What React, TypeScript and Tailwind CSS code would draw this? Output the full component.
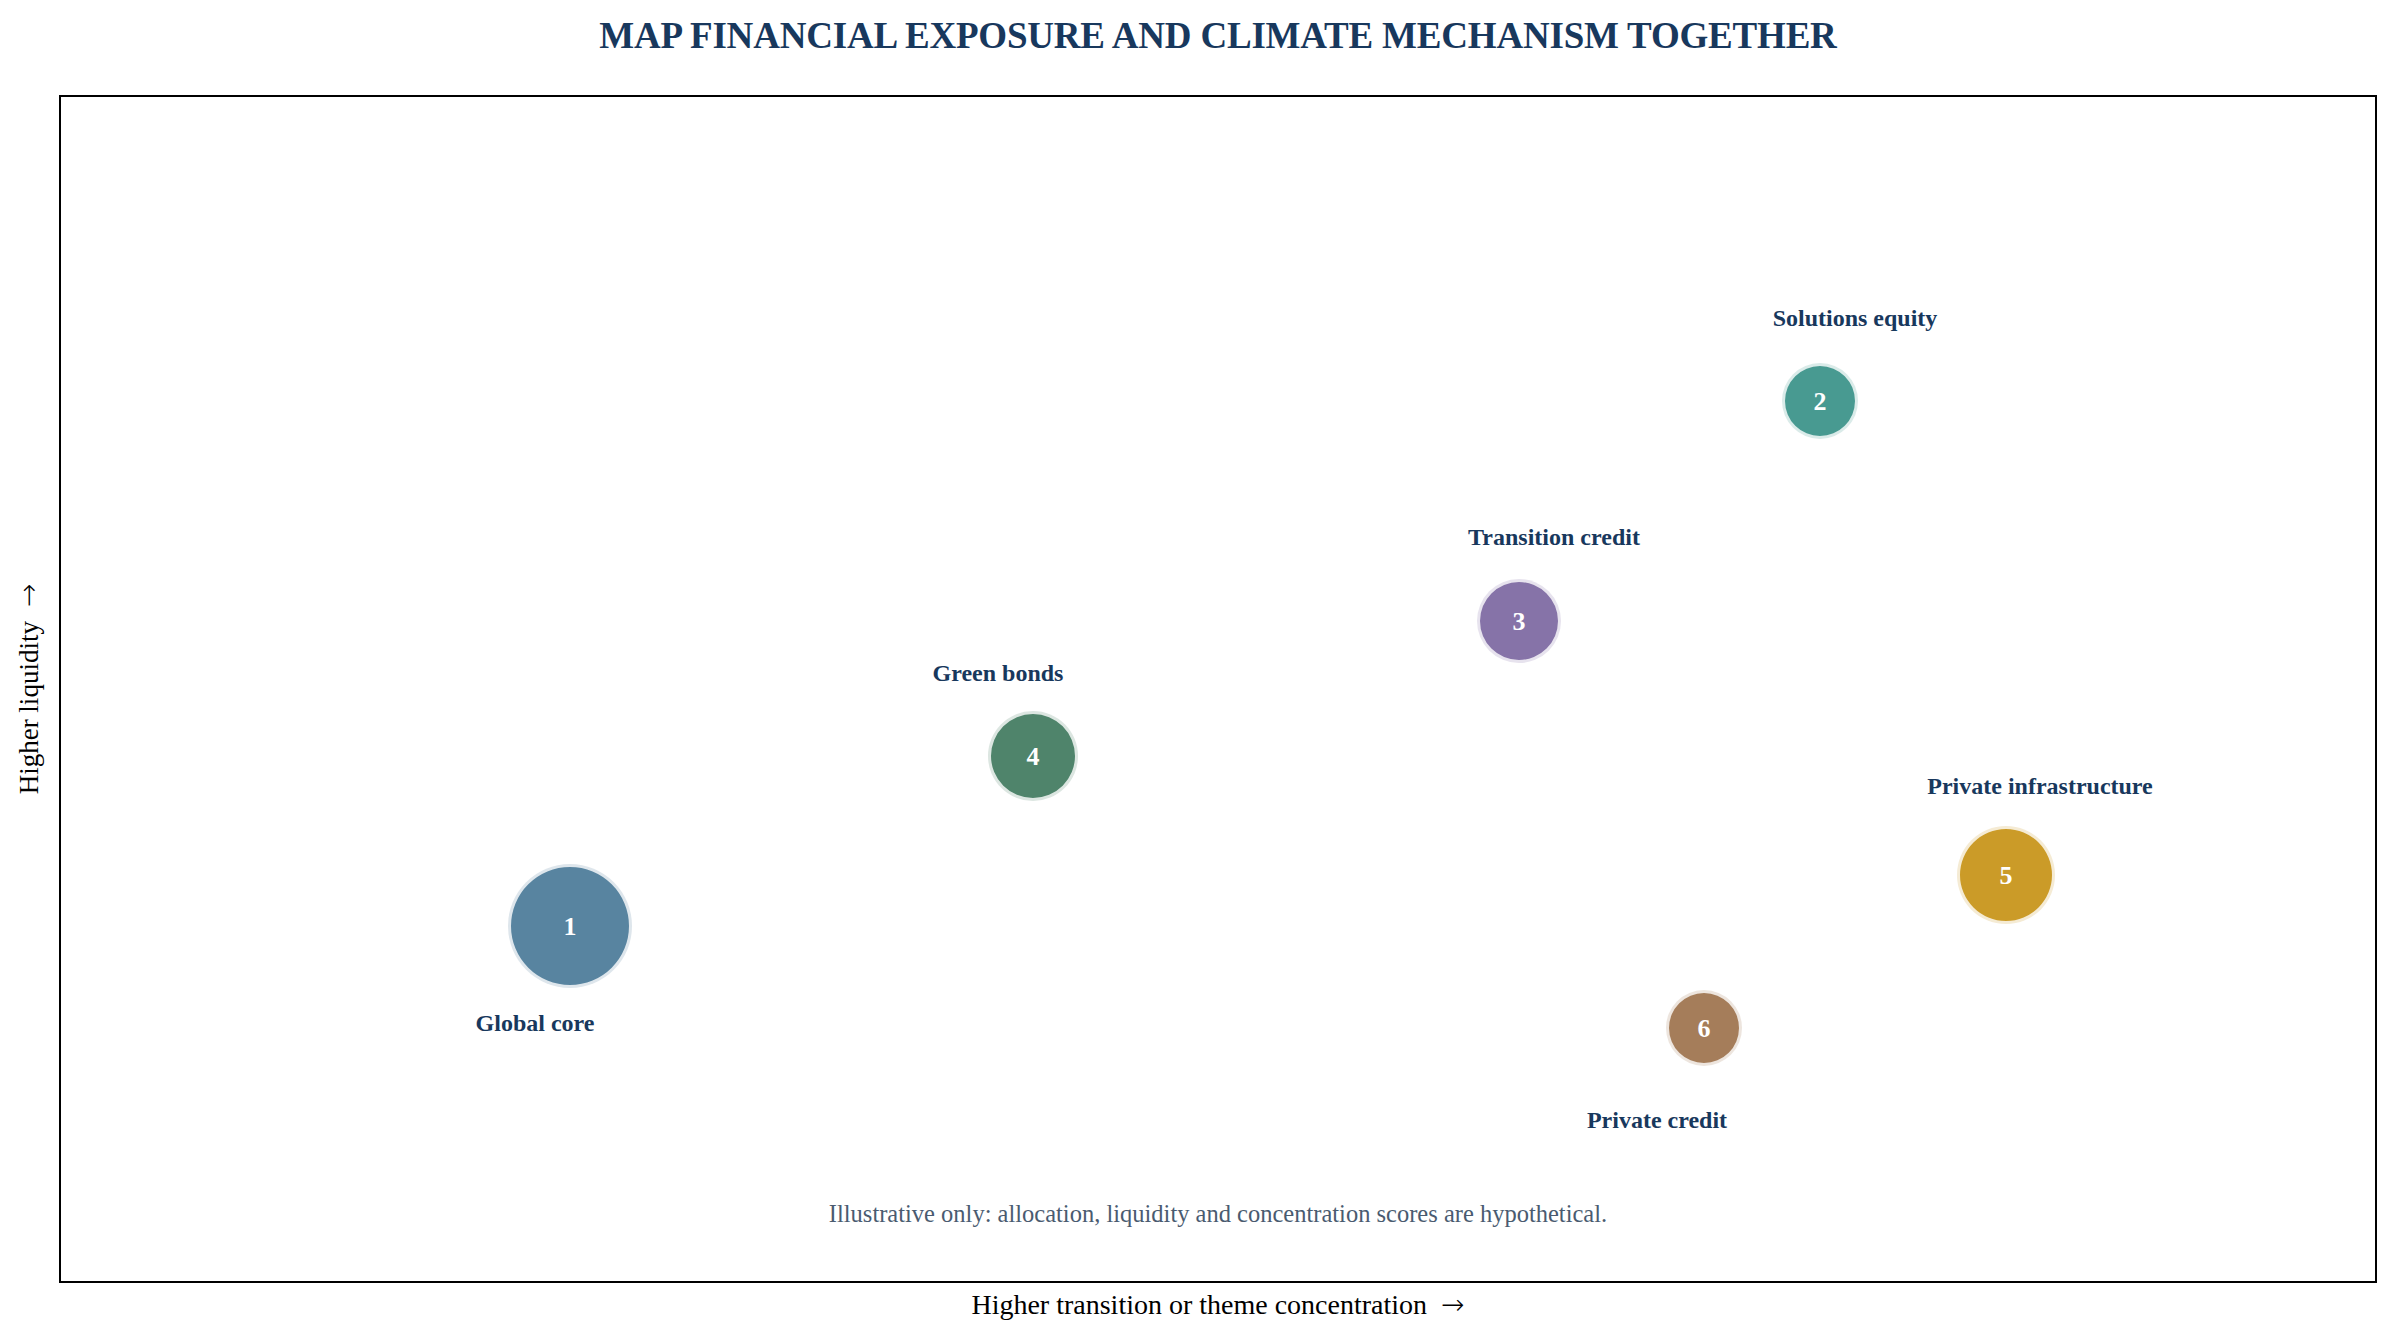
const bubbles = [
  { id: 1, x: 509, y: 829, r: 62, color: 'bg-[#5884a0]' },
  { id: 2, x: 1759, y: 304, r: 38, color: 'bg-[#489a91]' },
  { id: 3, x: 1458, y: 524, r: 42, color: 'bg-[#8673a8]' },
  { id: 4, x: 972, y: 659, r: 45, color: 'bg-[#4f846b]' },
  { id: 5, x: 1945, y: 778, r: 49, color: 'bg-[#cb9b28]' },
  { id: 6, x: 1643, y: 931, r: 38, color: 'bg-[#a57d5a]' },
];

const labels = [
  { text: 'Global core', x: 474, y: 926 },
  { text: 'Solutions equity', x: 1794, y: 221 },
  { text: 'Transition credit', x: 1493, y: 440 },
  { text: 'Green bonds', x: 937, y: 576 },
  { text: 'Private infrastructure', x: 1979, y: 689 },
  { text: 'Private credit', x: 1596, y: 1023 },
];

function Arrow() {
  return (
    <span className="ml-[14px] font-['DejaVu_Sans',sans-serif] font-extralight text-[28px]">
      →
    </span>
  );
}

export default function App() {
  return (
    <div className="w-[2397px] h-[1342px] bg-white flex font-['Liberation_Serif','Times_New_Roman',serif]">
      <div className="w-[59px] pt-[95px] pb-[59px] flex items-center justify-center">
        <div className="-rotate-90 whitespace-nowrap text-[27px] text-black flex items-center">
          Higher liquidity
          <Arrow />
        </div>
      </div>
      <div className="w-[2318px] flex flex-col">
        <h1 className="h-[95px] flex items-center justify-center pb-[24px] text-[37px] font-bold text-[#18385d] tracking-[-0.2px]">
          MAP FINANCIAL EXPOSURE AND CLIMATE MECHANISM TOGETHER
        </h1>
        <div className="relative h-[1188px] border-2 border-black flex items-end justify-center pb-[48px]">
          {bubbles.map((b) => (
            <div
              key={b.id}
              className={`absolute -translate-x-1/2 -translate-y-1/2 rounded-full border-[3px] border-white/80 flex items-center justify-center text-white font-bold text-[26px] ${b.color}`}
              style={{ left: b.x, top: b.y, width: b.r * 2, height: b.r * 2 }}
            >
              {b.id}
            </div>
          ))}
          {labels.map((l) => (
            <div
              key={l.text}
              className="absolute -translate-x-1/2 -translate-y-1/2 whitespace-nowrap text-[24px] font-bold text-[#18385d]"
              style={{ left: l.x, top: l.y }}
            >
              {l.text}
            </div>
          ))}
          <p className="text-[24.5px] text-[#4a5b70]">
            Illustrative only: allocation, liquidity and concentration scores are hypothetical.
          </p>
        </div>
        <div className="h-[44px] flex items-center justify-center text-[28px] text-black">
          Higher transition or theme concentration
          <Arrow />
        </div>
      </div>
    </div>
  );
}
